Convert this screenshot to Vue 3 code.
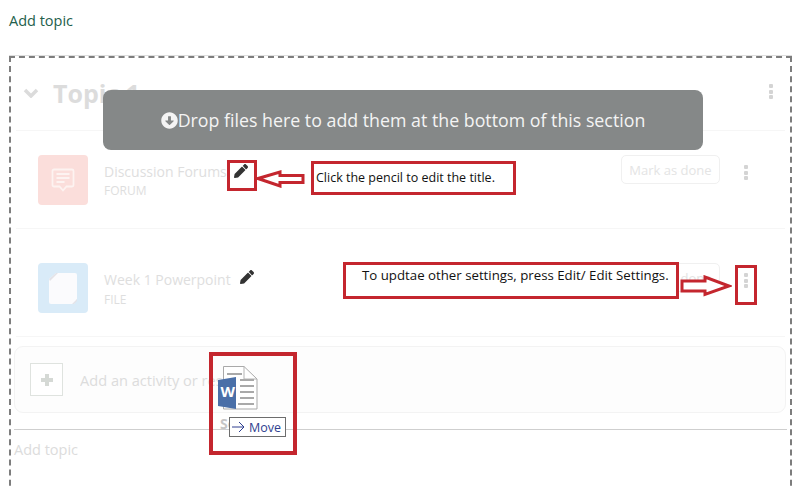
<template>
  <div class="page">
    <a class="add-topic">Add topic</a>

    <section class="section">
      <header class="section-head">
        <svg class="chevron" viewBox="0 0 16 10" width="16" height="10">
          <polyline points="2,2 8,8 14,2" />
        </svg>
        <h2>Topic 1</h2>
        <span class="kebab"><i></i><i></i><i></i></span>
      </header>

      <div v-for="item in activities" :key="item.name" class="activity" :class="item.cls">
        <div class="activity-icon">
          <svg v-if="item.cls === 'forum'" viewBox="0 0 24 25" width="24" height="25">
            <path class="bubble" d="M3 1.500h18a1.500 1.500 0 0 1 1.500 1.500v14a1.500 1.500 0 0 1-1.500 1.500h-5.500l-3.500 4-3.500-4H3a1.500 1.500 0 0 1-1.500-1.500V3A1.500 1.500 0 0 1 3 1.500z" />
            <path class="bubble" d="M5.500 6h13M5.500 10h13M5.500 14h8" />
          </svg>
          <svg v-else viewBox="0 0 28 31" width="28" height="31">
            <path fill="#fbfbfd" d="M7 0h19a2 2 0 0 1 2 2v24l-3 5H2a2 2 0 0 1-2-2V6z" />
            <path fill="#e3e3e8" d="M7 0L0 6l1 2 8-8zM28 26l-5 5h2l3-3z" />
          </svg>
        </div>
        <div class="activity-text">
          <div class="activity-name">
            <span>{{ item.name }}</span>
            <svg class="pencil" viewBox="0 0 512 512" width="14" height="14"><path :d="pencilPath" /></svg>
          </div>
          <div class="activity-type">{{ item.type }}</div>
        </div>
        <button class="done">Mark as done</button>
        <span class="kebab"><i></i><i></i><i></i></span>
      </div>

      <div class="add-activity">
        <span class="plus-box"><span class="plus"></span></span>
        <span class="add-label">Add an activity or resource</span>
      </div>

      <hr class="rule" />
      <a class="add-topic-faded">Add topic</a>
    </section>

    <div class="drop-banner">
      <svg viewBox="0 0 512 512" width="17" height="17"><path fill="#f4f4f4" d="M504 256c0 137-111 248-248 248S8 393 8 256 119 8 256 8s248 111 248 248zM212 140v116h-70.900c-10.700 0-16.100 13-8.500 20.500l114.900 114.300c4.700 4.700 12.200 4.700 16.900 0l114.900-114.300c7.600-7.600 2.200-20.500-8.500-20.500H300V140c0-6.600-5.400-12-12-12h-64c-6.600 0-12 5.400-12 12z" /></svg>
      <span>Drop files here to add them at the bottom of this section</span>
    </div>

    <div class="red-box pencil-box"></div>
    <svg class="arrow arrow-left" viewBox="0 0 50 18" width="50" height="18">
      <polygon points="2,8.500 24,2 24,5.500 47,5.500 47,12.500 24,12.500 24,16" />
    </svg>
    <div class="red-box note note-title">Click the pencil to edit the title.</div>

    <div class="red-box note note-settings">To updtae other settings, press Edit/ Edit Settings.</div>
    <svg class="arrow arrow-right" viewBox="0 0 52 22" width="52" height="22">
      <polygon points="2,6 25,6 25,2 49,11 25,19.500 25,16 2,16" />
    </svg>
    <div class="red-box kebab-box"></div>

    <div class="red-box word-box"></div>
    <span class="drag-ghost">Se</span>
    <svg class="word" viewBox="0 0 40 44" width="40" height="44">
      <path d="M5.500 .5H26L39 13v30H5.500z" fill="#fff" stroke="#a9a9a9" />
      <path d="M26 .5V13h13" fill="none" stroke="#b5b5b5" />
      <path d="M9 8h15M22 14h14M22 20h14M22 26h14M22 32h14M20 38h16" stroke="#a9a9a9" stroke-width="2" />
      <path d="M0 14l18-3v32l-18-3z" fill="#4a6fa8" />
      <text x="2.500" y="31" class="word-w">W</text>
    </svg>
    <div class="move-tag">
      <svg viewBox="0 0 13 12" width="13" height="12">
        <path d="M0 6h12M7 1l5 5-5 5" fill="none" stroke="#2f3f8f" />
      </svg>
      <span>Move</span>
    </div>
  </div>
</template>

<script setup>
const pencilPath = 'M497.900 142.100l-46.100 46.100c-4.700 4.700-12.300 4.700-17 0l-111-111c-4.700-4.700-4.700-12.300 0-17l46.100-46.100c18.700-18.700 49.100-18.700 67.900 0l60.100 60.100c18.800 18.700 18.800 49.100 0 67.900zM284.200 99.800L21.600 362.400.4 483.900c-2.900 16.400 11.400 30.600 27.800 27.800l121.500-21.300 262.600-262.600c4.700-4.700 4.700-12.300 0-17l-111-111c-4.800-4.700-12.400-4.700-17.100 0z'

const activities = [
  { name: 'Discussion Forums', type: 'FORUM', cls: 'forum' },
  { name: 'Week 1 Powerpoint', type: 'FILE', cls: 'file' }
]
</script>

<style>
html, body {
  margin: 0;
  background: #fff;
  overflow: hidden;
}
</style>

<style scoped>
* {
  box-sizing: border-box;
}

.page {
  position: relative;
  width: 797px;
  height: 489px;
  overflow: hidden;
  background: #fff;
  font-family: "Open Sans", "Liberation Sans", sans-serif;
}

.add-topic {
  display: block;
  height: 56px;
  padding: 10px 0 0 9px;
  font-size: 14.500px;
  line-height: 21px;
  color: #23604c;
}

.section {
  width: 783px;
  height: 470px;
  margin-left: 9px;
  border: 2px dashed #7d7d7d;
  padding: 0 2px;
  box-shadow: 0 -1px 0 #dedede;
}

.section-head {
  display: flex;
  align-items: center;
  height: 73px;
  margin: 0 3px;
  padding: 0 12px 2px 7px;
  border-bottom: 1px solid #f6f6f6;
}

.section-head h2 {
  flex: 1;
  margin: 0 0 0 14px;
  font-size: 25px;
  font-weight: 700;
  color: #dcdcdc;
}

.section-head .kebab {
  margin-bottom: 3px;
}

.chevron polyline {
  fill: none;
  stroke: #dbdbdb;
  stroke-width: 3.500;
}

.kebab {
  display: flex;
  flex-direction: column;
  gap: 1.500px;
  width: 4px;
}

.kebab i {
  width: 4px;
  height: 4px;
  background: #d4d4d4;
  border-radius: 1px;
}

.activity {
  display: flex;
  align-items: flex-start;
  height: 99px;
  margin: 0 3px;
  padding: 24px 37px 0 22px;
  border-bottom: 1px solid #f6f6f6;
}

.activity.forum {
  height: 98px;
  margin-bottom: 9px;
}

.activity.file {
  padding-top: 25px;
}

.activity-icon {
  display: flex;
  align-items: center;
  justify-content: center;
  flex: none;
  width: 50px;
  height: 50px;
  border-radius: 4px;
}

.forum .activity-icon {
  background: #fbdedb;
}

.file .activity-icon {
  background: #d9ebf8;
}

.bubble {
  fill: none;
  stroke: #fdf3f1;
  stroke-width: 1.800;
}

.activity-text {
  flex: 1;
  margin-left: 16px;
}

.activity-name {
  display: flex;
  align-items: center;
  gap: 8px;
  height: 24px;
  margin-top: 4px;
  font-size: 14px;
  color: #dedede;
}

.pencil {
  fill: #333;
}

.forum .pencil {
  margin-left: -1px;
}

.file .pencil {
  margin: 0 0 4px 1px;
}

.activity-type {
  font-size: 12px;
  line-height: 16px;
  color: #dedede;
}

.file .activity-type {
  margin-top: 1px;
}

.done {
  width: 99px;
  height: 29px;
  margin: 0 24px 0 0;
  padding: 0;
  background: #fff;
  border: 1px solid #f0f0f0;
  border-radius: 5px;
  font: 13px "Open Sans", "Liberation Sans", sans-serif;
  color: #e4e4e4;
}

.activity .kebab {
  margin-top: 10px;
}

.add-activity {
  display: flex;
  align-items: center;
  gap: 17px;
  height: 67px;
  margin: 9px 2px 0 1px;
  padding-left: 15px;
  background: #fdfdfd;
  border: 1px solid #f3f3f3;
  border-radius: 9px;
  font-size: 14.600px;
  color: #dcdcdc;
}

.add-label {
  width: 177px;
  overflow: hidden;
  white-space: nowrap;
}

.plus-box {
  display: flex;
  align-items: center;
  justify-content: center;
  width: 33px;
  height: 33px;
  background: #fff;
  border: 1px solid #dfe3df;
}

.plus {
  width: 12px;
  height: 12px;
  background:
    linear-gradient(#d5d9d5, #d5d9d5) center / 12px 4px no-repeat,
    linear-gradient(#d5d9d5, #d5d9d5) center / 4px 12px no-repeat;
}

.rule {
  height: 1px;
  margin: 16px 1px 0 1px;
  border: 0;
  background: #cfcfcf;
}

.add-topic-faded {
  display: block;
  margin: 9px 0 0 1px;
  font-size: 14.500px;
  line-height: 21px;
  color: #dcdcdc;
}

.drop-banner {
  position: absolute;
  left: 103px;
  top: 90px;
  width: 600px;
  height: 60px;
  display: flex;
  align-items: center;
  justify-content: center;
  background: #858888;
  border-radius: 8px;
  font-size: 17.800px;
  color: #f4f4f4;
}

.red-box {
  position: absolute;
  border: 3px solid #c4262e;
}

.pencil-box {
  left: 227px;
  top: 160px;
  width: 30px;
  height: 31px;
}

.note {
  background: #fff;
  line-height: 16px;
  color: #111;
  white-space: nowrap;
}

.note-title {
  left: 311px;
  top: 161px;
  width: 205px;
  height: 34px;
  padding: 6px 0 0 2px;
  font-size: 12.500px;
}

.note-settings {
  left: 343px;
  top: 262px;
  width: 336px;
  height: 37px;
  padding: 2px 0 0 16px;
  font-size: 13.250px;
}

.arrow {
  position: absolute;
}

.arrow polygon {
  fill: #fff;
  stroke: #c4262e;
  stroke-width: 3;
}

.arrow-left {
  left: 256px;
  top: 170px;
}

.arrow-right {
  left: 680px;
  top: 275px;
}

.kebab-box {
  left: 735px;
  top: 265px;
  width: 22px;
  height: 40px;
}

.word-box {
  left: 209px;
  top: 352px;
  width: 88px;
  height: 103px;
  border-width: 4px;
}

.word {
  position: absolute;
  left: 218px;
  top: 366px;
}

.word-w {
  font: 700 15px "Open Sans", sans-serif;
  fill: #fff;
}

.drag-ghost {
  position: absolute;
  left: 220px;
  top: 416px;
  font-size: 14px;
  line-height: 16px;
  font-weight: 700;
  color: #c6c6c6;
}

.move-tag {
  position: absolute;
  left: 229px;
  top: 417px;
  display: flex;
  align-items: center;
  gap: 4px;
  width: 57px;
  height: 20px;
  padding-left: 2px;
  background: #fff;
  border: 1px solid #6d6d6d;
  font-size: 12.500px;
  color: #2f3f8f;
  white-space: nowrap;
}
</style>
